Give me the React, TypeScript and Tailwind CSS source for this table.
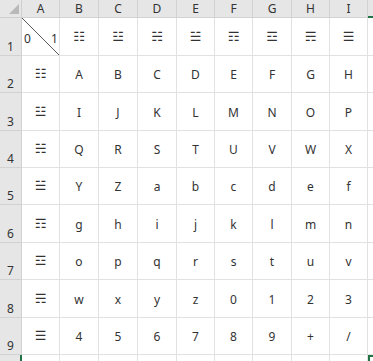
const cols = ["A", "B", "C", "D", "E", "F", "G", "H", "I"];
// widths per column, px
const colWidths = [38, 39, 39, 39, 38, 38, 39, 38, 38];
const rowHeights = [38, 37, 38, 37, 37, 38, 37, 38, 37];

// trigrams in binary order, top line = most significant bit
const trigrams = ["☷", "☳", "☵", "☱", "☶", "☲", "☴", "☰"];
const b64 = "ABCDEFGHIJKLMNOPQRSTUVWXYZabcdefghijklmnopqrstuvwxyz0123456789+/";

const font = { fontFamily: '"Noto Sans", "Liberation Sans", sans-serif' };
const triFont = { fontFamily: '"DejaVu Sans", sans-serif' };

function CornerCell() {
  return (
    <div className="relative h-[18px] w-[22px] border-r border-b border-[#cfcfcf] bg-[#e6e6e6]">
      <div className="absolute right-[2px] bottom-[3px] h-0 w-0 border-l-[10px] border-t-[10px] border-l-transparent border-t-transparent border-r-0 border-b-[10px] border-b-[#b9b9b9]" />
    </div>
  );
}

function DiagonalCell() {
  return (
    <div className="relative h-full w-full">
      <svg className="absolute inset-0 h-full w-full" preserveAspectRatio="none" viewBox="0 0 38 38">
        <line x1="0" y1="0" x2="38" y2="38" stroke="#555" strokeWidth="1" />
      </svg>
      <span className="absolute left-[2px] top-[12px] text-[12px] text-[#333]">0</span>
      <span className="absolute left-[29px] top-[12px] text-[12px] text-[#333]">1</span>
    </div>
  );
}

export default function App() {
  const gridCols = "grid-cols-[22px_38px_39px_39px_39px_38px_38px_39px_38px_38px_1fr]";

  return (
    <div className="h-[361px] w-[373px] overflow-hidden bg-white" style={font}>
      <div className={`grid ${gridCols} grid-rows-[18px_38px_37px_38px_37px_37px_38px_37px_38px_37px_1fr] h-full`}>
        <CornerCell />
        {cols.map((c) => (
          <div
            key={c}
            className="flex items-end justify-center border-r border-b border-[#d2d2d2] bg-[#e6e6e6] pb-[1px] text-[12px] leading-[15px] text-[#333]"
          >
            {c}
          </div>
        ))}
        <div className="border-b-2 border-[#217346] bg-[#e6e6e6]" />

        {rowHeights.map((_, r) => (
          <Row key={r} r={r} />
        ))}

        {/* row 10, partly visible */}
        <div className="border-r-2 border-[#217346] bg-[#e6e6e6]" />
        {cols.map((c) => (
          <div key={c} className="border-r border-[#e1e1e1]" />
        ))}
        <div className="border-t-2 border-l-2 border-[#217346]" />
      </div>
    </div>
  );
}

function Row({ r }: { r: number }) {
  return (
    <>
      <div className="flex items-end justify-center border-r border-b border-[#d2d2d2] bg-[#e6e6e6] pb-[1px] text-[12px] leading-[15px] text-[#333]">
        {r + 1}
      </div>
      {cols.map((c, ci) => {
        let content: React.ReactNode = null;
        if (r === 0 && ci === 0) content = <DiagonalCell />;
        else if (r === 0)
          content = (
            <span className="text-[13px] text-[#333]" style={triFont}>
              {trigrams[ci - 1]}
            </span>
          );
        else if (ci === 0)
          content = (
            <span className="text-[13px] text-[#333]" style={triFont}>
              {trigrams[r - 1]}
            </span>
          );
        else content = <span className="pt-[2px] text-[12px] text-[#333]">{b64[(r - 1) * 8 + ci - 1]}</span>;
        return (
          <div key={c} className="flex items-center justify-center border-r border-b border-[#e1e1e1]">
            {content}
          </div>
        );
      })}
      <div className="border-b border-[#e1e1e1]" />
    </>
  );
}
